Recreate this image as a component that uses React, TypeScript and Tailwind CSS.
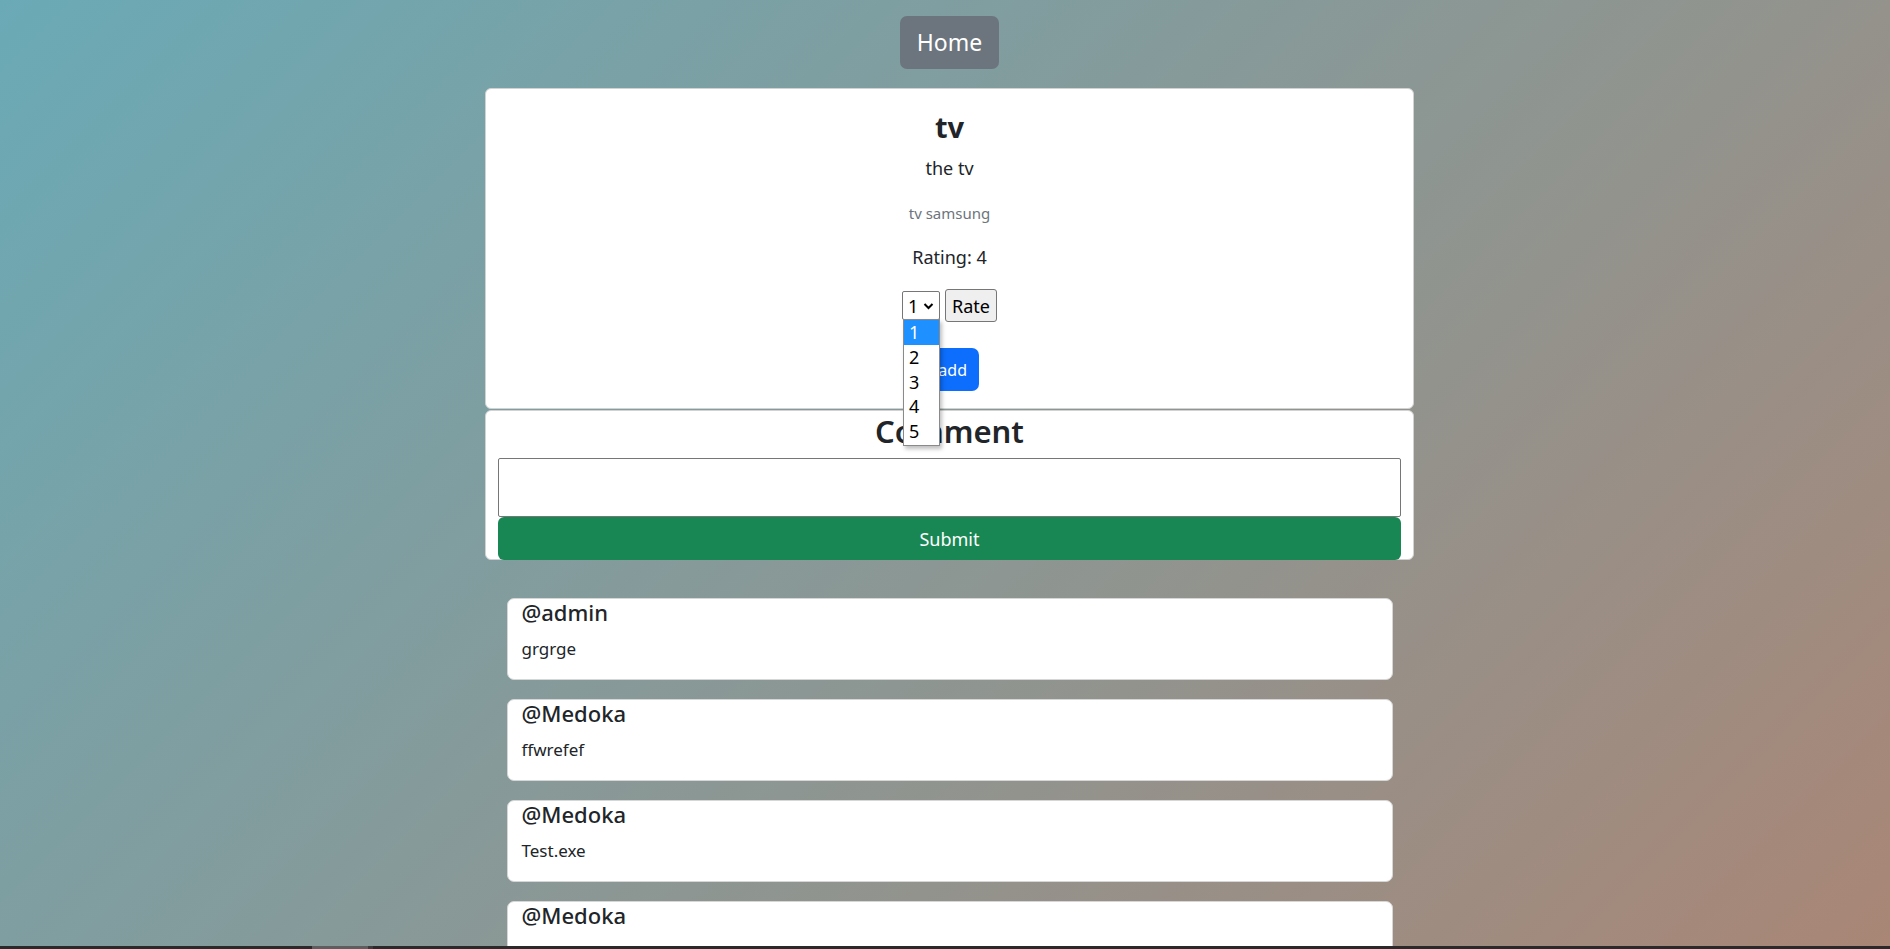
import React from "react";

const comments = [
  { user: "@admin", text: "grgrge" },
  { user: "@Medoka", text: "ffwrefef" },
  { user: "@Medoka", text: "Test.exe" },
  { user: "@Medoka", text: "Test" },
];

export default function App() {
  return (
    <div
      className="relative h-screen overflow-hidden bg-[linear-gradient(135deg,#6aaab6_0%,#a98676_100%)] text-[#212529]"
      style={{ fontFamily: '"Segoe UI", "Noto Sans", Roboto, sans-serif' }}
    >
      <div className="flex flex-col items-center pl-[9px] pt-[16px]">
        <button className="h-[53px] w-[99px] rounded-[7px] bg-[#6c757d] text-[23px] leading-none text-white">
          Home
        </button>

        {/* Product card */}
        <div className="mt-[19px] flex w-[929px] flex-col items-center rounded-[6px] border border-[#d2d2d2] bg-white pb-[17px] pt-[18px]">
          <div className="h-[40px] text-[29px] font-bold leading-[40px]">tv</div>
          <div className="mt-[7px] h-[29px] text-[18px] leading-[29px]">the tv</div>
          <div className="mt-[18px] h-[24px] text-[15px] leading-[24px] text-[#6c757d]">tv samsung</div>
          <div className="mt-[18px] h-[29px] text-[18px] leading-[29px]">Rating: 4</div>
          <div className="mt-[17px] flex h-[33px] items-center gap-[5px]">
            <div className="relative">
              <div className="flex h-[29px] w-[38px] items-center rounded-[2px] border border-[#767676] bg-white pl-[5px] text-[18px] leading-none text-black">
                <span>1</span>
                <svg className="ml-[5px]" width="11" height="8" viewBox="0 0 11 8">
                  <path d="M1.5 2 L5.5 6 L9.5 2" fill="none" stroke="#000" strokeWidth="2" />
                </svg>
              </div>
              <div className="absolute left-[1px] top-[28px] z-10 w-[37px] border border-[#8a8a8a] bg-white pb-[2px] text-[18px] text-black shadow-[2px_3px_4px_rgba(0,0,0,0.25)]">
                <div className="h-[25px] bg-[#1e90ff] pl-[5px] leading-[25px] text-white">1</div>
                <div className="h-[25px] pl-[5px] leading-[25px]">2</div>
                <div className="h-[24px] pl-[5px] leading-[24px]">3</div>
                <div className="h-[25px] pl-[5px] leading-[25px]">4</div>
                <div className="h-[24px] pl-[5px] leading-[24px]">5</div>
              </div>
            </div>
            <button className="h-[33px] w-[52px] rounded-[3px] border border-[#767676] bg-[#efefef] text-[18px] leading-none text-black">
              Rate
            </button>
          </div>
          <button className="mt-[26px] flex h-[43px] w-[59px] items-center justify-end rounded-[7px] bg-[#0d6efd] pr-[12px] text-[16px] leading-none text-white">
            add
          </button>
        </div>

        {/* Comment form card */}
        <div className="mt-[1px] flex w-[929px] flex-col items-center rounded-[6px] border border-[#d2d2d2] bg-white px-[12px]">
          <div className="h-[40px] text-[31px] font-semibold leading-[40px]">Comment</div>
          <textarea className="mt-[7px] h-[59px] w-full resize-none rounded-[2px] border border-[#767676] bg-white outline-none" />
          <button className="-mb-[1px] h-[43px] w-full rounded-[6px] bg-[#198754] text-[18px] leading-none text-white">
            Submit
          </button>
        </div>

        {/* Comments */}
        <div className="mt-[38px] flex w-[886px] flex-col gap-[19px]">
          {comments.map((c, i) => (
            <div
              key={i}
              className="h-[82px] rounded-[7px] border border-[#d6d6d6] bg-white px-[14px] pt-[1px]"
            >
              <div className="h-[24px] text-[22px] font-medium leading-[24px]">{c.user}</div>
              <div className="mt-[10px] h-[29px] text-[17px] leading-[29px]">{c.text}</div>
            </div>
          ))}
        </div>
      </div>

      {/* bottom scrollbar strip */}
      <div className="absolute bottom-0 left-0 right-0 flex h-[3px] bg-[#2a2a2a]">
        <div className="ml-[312px] h-full w-[56px] bg-[#5e5e5e]" />
        <div className="h-full w-[5px] bg-[#3c3c3c]" />
      </div>
    </div>
  );
}
